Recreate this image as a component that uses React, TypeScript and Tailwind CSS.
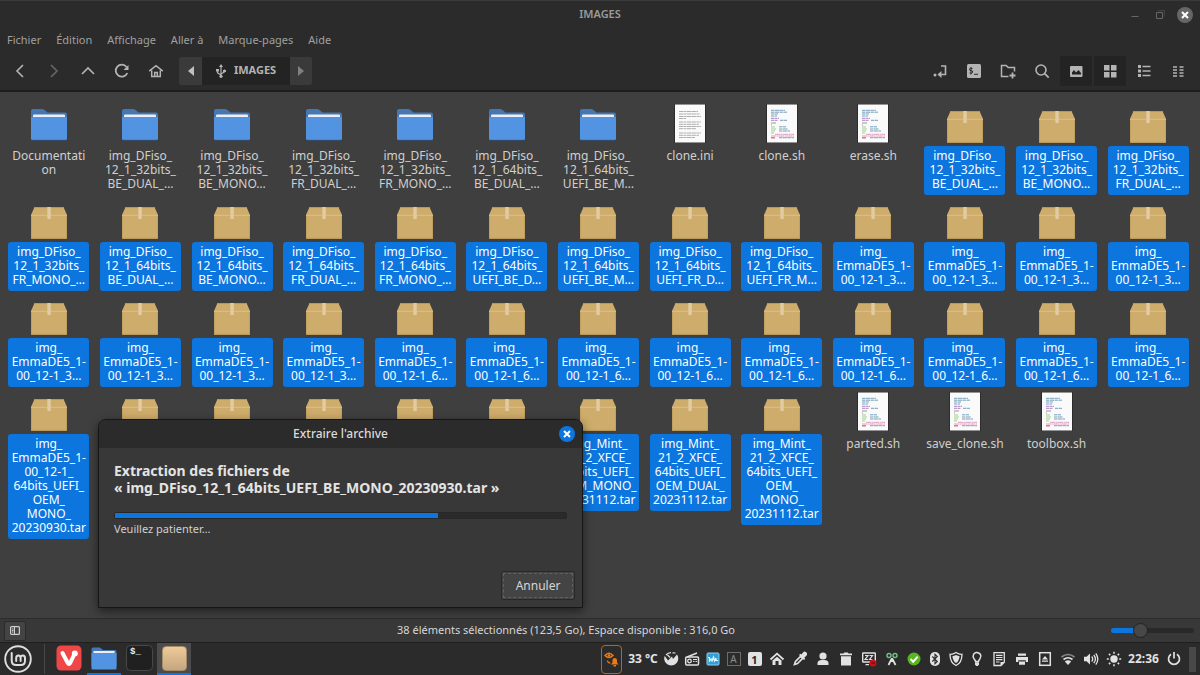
import type { ReactNode } from "react";

type FileKind = "folder" | "archive" | "text" | "script";

interface FileEntry {
  kind: FileKind;
  lines: string[];
  selected?: boolean;
}

const folder = (...lines: string[]): FileEntry => ({ kind: "folder", lines });
const script = (...lines: string[]): FileEntry => ({ kind: "script", lines });
const archive = (...lines: string[]): FileEntry => ({ kind: "archive", lines, selected: true });

const emma3 = archive("img_", "EmmaDE5_1-", "00_12-1_3…");
const emma6 = archive("img_", "EmmaDE5_1-", "00_12-1_6…");
const emmaOem = archive("img_", "EmmaDE5_1-", "00_12-1_", "64bits_UEFI_", "OEM_", "MONO_", "20230930.tar");
// label sits behind the dialog
const covered = archive();

const files: FileEntry[] = [
  folder("Documentati", "on"),
  folder("img_DFiso_", "12_1_32bits_", "BE_DUAL_…"),
  folder("img_DFiso_", "12_1_32bits_", "BE_MONO…"),
  folder("img_DFiso_", "12_1_32bits_", "FR_DUAL_…"),
  folder("img_DFiso_", "12_1_32bits_", "FR_MONO_…"),
  folder("img_DFiso_", "12_1_64bits_", "BE_DUAL_…"),
  folder("img_DFiso_", "12_1_64bits_", "UEFI_BE_M…"),
  { kind: "text", lines: ["clone.ini"] },
  script("clone.sh"),
  script("erase.sh"),
  archive("img_DFiso_", "12_1_32bits_", "BE_DUAL_…"),
  archive("img_DFiso_", "12_1_32bits_", "BE_MONO…"),
  archive("img_DFiso_", "12_1_32bits_", "FR_DUAL_…"),

  archive("img_DFiso_", "12_1_32bits_", "FR_MONO_…"),
  archive("img_DFiso_", "12_1_64bits_", "BE_DUAL_…"),
  archive("img_DFiso_", "12_1_64bits_", "BE_MONO…"),
  archive("img_DFiso_", "12_1_64bits_", "FR_DUAL_…"),
  archive("img_DFiso_", "12_1_64bits_", "FR_MONO_…"),
  archive("img_DFiso_", "12_1_64bits_", "UEFI_BE_D…"),
  archive("img_DFiso_", "12_1_64bits_", "UEFI_BE_M…"),
  archive("img_DFiso_", "12_1_64bits_", "UEFI_FR_D…"),
  archive("img_DFiso_", "12_1_64bits_", "UEFI_FR_M…"),
  emma3,
  emma3,
  emma3,
  emma3,

  emma3,
  emma3,
  emma3,
  emma3,
  emma6,
  emma6,
  emma6,
  emma6,
  emma6,
  emma6,
  emma6,
  emma6,
  emma6,

  emmaOem,
  covered,
  covered,
  covered,
  covered,
  covered,
  archive("img_Mint_", "21_2_XFCE_", "64bits_UEFI_", "OEM_MONO_", "20231112.tar"),
  archive("img_Mint_", "21_2_XFCE_", "64bits_UEFI_", "OEM_DUAL_", "20231112.tar"),
  archive("img_Mint_", "21_2_XFCE_", "64bits_UEFI_", "OEM_", "MONO_", "20231112.tar"),
  script("parted.sh"),
  script("save_clone.sh"),
  script("toolbox.sh"),
];

const menus = ["Fichier", "Édition", "Affichage", "Aller à", "Marque-pages", "Aide"];

/* file icons, all on a 48x44 canvas */
function FolderIcon() {
  return (
    <svg width="48" height="44" viewBox="0 0 48 44" aria-hidden="true">
      <path d="M6 12q0-2 2-2h9q1.500 0 2.500 1l3 2.500H40q2 0 2 2V38H6z" fill="#4677b5" />
      <path d="M8 16.500q0-1 1-1h30q1 0 1 1V22H8z" fill="#eeeef4" />
      <path d="M6 18h36v21.500q0 1.500-1.500 1.500h-33Q6 41 6 39.500z" fill="#5294e2" />
      <path d="M7 41.300h34" stroke="#30507c" strokeWidth="0.800" />
    </svg>
  );
}

function ArchiveIcon() {
  return (
    <svg width="48" height="44" viewBox="0 0 48 44" aria-hidden="true">
      <path d="M9.500 12h29l3.500 8v23.700H6V20z" fill="#ceac6b" />
      <path d="M9.500 12.500h29" stroke="#b9975a" />
      <path d="M6.500 20v23.200h35V20" fill="none" stroke="#c09f60" />
      <path d="M6 20.300h36" stroke="#dcc08a" />
      <path d="M22.300 12h3.500v12h-3.500z" fill="#e2cba0" />
    </svg>
  );
}

function PageIcon({ children }: { children: ReactNode }) {
  return (
    <svg width="48" height="44" viewBox="0 0 48 44" aria-hidden="true">
      <rect x="8" y="5" width="32" height="39.500" rx="1" fill="#2c2c2c" />
      <rect x="9" y="5.500" width="30" height="38" fill="#fafafa" />
      {children}
    </svg>
  );
}

function TextIcon() {
  return (
    <PageIcon>
      <g stroke="#a6a6a6" strokeWidth="0.900" strokeDasharray="4 0.500 2.500 0.500 5 0.400">
        <path d="M13 12.500h19M13 15h21M13 17.500h22M13 19.500h7M13 23h22M13 25.300h20M13 27.500h22M13 29.700h17M13 34h22M13 36.300h20M13 38.500h16" />
      </g>
    </PageIcon>
  );
}

function ScriptIcon() {
  return (
    <PageIcon>
      <g strokeWidth="1" fill="none" opacity="0.850">
        <path d="M13 11.300h14M13 13.200h16M13 15h7M13 17h6M22 21.300h7M21 27.800h7M21 30h9M21 32h11M21 38.700h15" stroke="#5e93b5" strokeDasharray="3 0.500 5 0.400" />
        <path d="M13 19.300h8M13 21.300h7" stroke="#a56bc0" strokeDasharray="3 0.500" />
        <path d="M13 24h5M13 26h1" stroke="#888" />
        <path d="M13 28h4M13 30h5M13 32h4M13 34h3" stroke="#8ccb77" />
        <path d="M17 35.300h19M13 37h23" stroke="#dd8ab4" strokeDasharray="5 0.600 2 0.500" />
        <path d="M13 38.800h4" stroke="#e2474f" strokeWidth="1.300" />
      </g>
    </PageIcon>
  );
}

const icons: Record<FileKind, () => ReactNode> = {
  folder: FolderIcon,
  archive: ArchiveIcon,
  text: TextIcon,
  script: ScriptIcon,
};

function FileTile({ kind, lines, selected }: FileEntry) {
  const Icon = icons[kind];
  return (
    <li className="flex flex-col items-center gap-[3px]">
      <Icon />
      <div
        className={
          selected
            ? "w-[81px] rounded-[3px] bg-[#0c75de] pt-[3px] pb-1 text-center text-white"
            : "w-[81px] pt-[3px] pb-1 text-center text-[#cfcfcf]"
        }
      >
        {lines.map((line, i) => (
          <div key={i} className="flex h-3.5 justify-center text-[12px] leading-[14px] whitespace-nowrap">
            {line}
          </div>
        ))}
      </div>
    </li>
  );
}

interface GlyphProps {
  size?: number;
  children: ReactNode;
}

/* 16px symbolic icon, stroked in the current colour */
function Glyph({ size = 16, children }: GlyphProps) {
  return (
    <svg
      width={size}
      height={size}
      viewBox="0 0 16 16"
      fill="none"
      stroke="currentColor"
      strokeWidth="1.600"
      aria-hidden="true"
      className="shrink-0"
    >
      {children}
    </svg>
  );
}

function ToolButton({ label, active, dim, children }: { label: string; active?: boolean; dim?: boolean; children: ReactNode }) {
  const base = "flex h-[30px] w-8 items-center justify-center rounded-xs";
  const tone = dim ? "text-[#686868]" : "text-[#b4b4b4]";
  return (
    <button aria-label={label} className={`${base} ${tone} ${active ? "bg-[#232323]" : ""}`}>
      {children}
    </button>
  );
}

function Toolbar() {
  return (
    <div className="flex h-[37px] items-center justify-between pr-1.5 pb-0.5 pl-1">
      <div className="flex items-center gap-0.5">
        <ToolButton label="Précédent">
          <Glyph><path d="M11 2L5 8l6 6" /></Glyph>
        </ToolButton>
        <ToolButton label="Suivant" dim>
          <Glyph><path d="M5 2l6 6-6 6" /></Glyph>
        </ToolButton>
        <ToolButton label="Dossier parent">
          <Glyph><path d="M2 11l6-6 6 6" /></Glyph>
        </ToolButton>
        <ToolButton label="Actualiser">
          <Glyph>
            <path d="M13.300 10A6 6 0 1 1 12.500 4" strokeWidth="1.800" />
            <path d="M14.500 2v5H9.500z" fill="currentColor" stroke="none" />
          </Glyph>
        </ToolButton>
        <ToolButton label="Dossier personnel">
          <Glyph>
            <path d="M1.200 8.200L8 2.600l6.800 5.600M3.700 7.500v6h8.600v-6M6.700 13.500v-4h2.600v4" strokeWidth="1.500" />
          </Glyph>
        </ToolButton>

        <div className="ml-[5px] flex h-7 overflow-hidden rounded-xs bg-[#232323]">
          <button aria-label="Faire défiler à gauche" className="flex w-[23px] items-center justify-center bg-[#3a3a3a] text-[#c0c0c0]">
            <svg width="6" height="10" viewBox="0 0 6 10"><path d="M6 0v10L0 5z" fill="currentColor" /></svg>
          </button>
          <button className="flex w-[88px] items-center justify-center gap-2 text-[11px] font-bold text-[#b4b4b4]">
            <svg width="10" height="14" viewBox="0 0 10 14" fill="none" stroke="currentColor" strokeWidth="1.200" aria-hidden="true">
              <path d="M5 1.500v11M5 11L1.500 8.800V6.500M5 10l3.500-2V5.500" />
              <path d="M5 0l2 3H3zM0 5h3v2.500H0zM7 6h3v2H7z" fill="currentColor" stroke="none" />
              <circle cx="5" cy="12.300" r="1.600" fill="currentColor" stroke="none" />
            </svg>
            IMAGES
          </button>
          <button aria-label="Faire défiler à droite" className="flex w-[22px] items-center justify-center bg-[#3a3a3a] text-[#808080]">
            <svg width="6" height="10" viewBox="0 0 6 10"><path d="M0 0v10l6-5z" fill="currentColor" /></svg>
          </button>
        </div>
      </div>

      <div className="flex items-center gap-0.5">
        <ToolButton label="Basculer vers l'emplacement">
          <Glyph>
            <path d="M9 3h4.500v8.500H7" />
            <path d="M9.500 8v7L5.500 11.500z" fill="currentColor" stroke="none" />
            <circle cx="3" cy="12" r="1.500" fill="currentColor" stroke="none" />
          </Glyph>
        </ToolButton>
        <ToolButton label="Ouvrir dans un terminal">
          <Glyph>
            <rect x="1" y="1" width="14" height="14" rx="1.500" fill="currentColor" stroke="none" />
            <path d="M6.500 5.500q-3-1-3 .7t1.700 1.500 1.500 1.400-3.200.9M5 4v7.500M8 11.300h4" stroke="#2b2b2b" strokeWidth="1" />
          </Glyph>
        </ToolButton>
        <ToolButton label="Nouveau dossier">
          <Glyph>
            <path d="M8.500 13.500h-7V2.500h4.700l2 2h6.300v4" strokeWidth="1.500" />
            <path d="M12.500 9.500v6M9.500 12.500h6" strokeWidth="1.800" />
          </Glyph>
        </ToolButton>
        <ToolButton label="Rechercher">
          <Glyph>
            <circle cx="7" cy="7" r="5" />
            <path d="M10.700 10.700l4 4" strokeWidth="1.800" />
          </Glyph>
        </ToolButton>
        <ToolButton label="Afficher les aperçus" active>
          <Glyph>
            <rect x="2" y="3" width="12.500" height="11" rx="1" fill="currentColor" stroke="none" />
            <path d="M4 11.500V9.500L6 7l2 2.500L10.500 7 13 10v1.500z" fill="#232323" stroke="none" />
          </Glyph>
        </ToolButton>
        <ToolButton label="Vue en icônes" active>
          <Glyph>
            <path d="M2 2h5.500v5.500H2zM9 2h5.500v5.500H9zM2 9h5.500v5.500H2zM9 9h5.500v5.500H9z" fill="currentColor" stroke="none" />
          </Glyph>
        </ToolButton>
        <ToolButton label="Vue en liste">
          <Glyph>
            <path d="M2 2h3v3H2zM2 6.500h3v3H2zM2 11h3v3H2z" fill="currentColor" stroke="none" />
            <path d="M6.500 3.500h8M6.500 8h8M6.500 12.500h8" />
          </Glyph>
        </ToolButton>
        <ToolButton label="Vue compacte">
          <Glyph>
            <path d="M3 4h4M9.500 4h4M3 7h4M9.500 7h4M3 10h4M9.500 10h4M3 13h4M9.500 13h4" strokeWidth="1.400" />
          </Glyph>
        </ToolButton>
      </div>
    </div>
  );
}

function Header() {
  return (
    <header className="border-b-2 border-[#1d1d1d] bg-[#2b2b2b]">
      <div className="grid h-7 grid-cols-[1fr_auto_1fr] items-center border-t border-[#3a3a3a]">
        <span />
        <h1 className="text-[11px] font-semibold text-[#9a9a9a]">IMAGES</h1>
        <div className="flex items-center justify-end gap-[9px] pr-[7px] text-[#666]">
          <button aria-label="Réduire">
            <Glyph><path d="M4.500 9.500h7" strokeWidth="1" /></Glyph>
          </button>
          <button aria-label="Agrandir">
            <Glyph>
              <path d="M6.500 3.500h6v6" strokeWidth="1" stroke="#444" />
              <path d="M4.500 5.500h6v6h-6z" strokeWidth="1" />
            </Glyph>
          </button>
          <button aria-label="Fermer" className="flex size-4 items-center justify-center rounded-full bg-[#666] text-white">
            <Glyph><path d="M5 5l6 6M11 5l-6 6" strokeWidth="2" /></Glyph>
          </button>
        </div>
      </div>
      <nav className="flex h-[25px] items-center gap-[15px] px-[7px]">
        {menus.map((menu) => (
          <button key={menu} className="text-[11px] text-[#a0a0a0]">
            {menu}
          </button>
        ))}
      </nav>
      <Toolbar />
    </header>
  );
}

function ExtractDialog() {
  const progress = 71.600;
  return (
    <section
      role="dialog"
      aria-labelledby="dialog-title"
      className="absolute top-[327px] left-[98px] w-[485px] rounded-t-lg border border-[#161616] bg-[#383838] shadow-[0_3px_10px_rgba(0,0,0,0.5)]"
    >
      <div className="grid h-7 grid-cols-[1fr_auto_1fr] items-center rounded-t-lg bg-[#2b2b2b]">
        <span />
        <h2 id="dialog-title" className="text-[12px] font-medium text-[#dadada]">
          Extraire l'archive
        </h2>
        <button aria-label="Fermer" className="mr-[7px] flex size-4 items-center justify-center justify-self-end rounded-full bg-[#0c75de] text-white">
          <Glyph><path d="M5 5l6 6M11 5l-6 6" strokeWidth="2" /></Glyph>
        </button>
      </div>
      <div className="px-[15px] pt-[14px]">
        <p className="text-[14px] leading-[17px] font-bold whitespace-nowrap text-[#e4e4e4]">
          Extraction des fichiers de
          <br />« img_DFiso_12_1_64bits_UEFI_BE_MONO_20230930.tar »
        </p>
        <div
          role="progressbar"
          aria-label="Extraction"
          aria-valuenow={Math.round(progress)}
          className="mt-4 h-[7px] rounded-xs border border-[#272727] bg-[#2a2a2a]"
        >
          <div className="h-full bg-[#0c75de]" style={{ width: `${progress}%` }} />
        </div>
        <p className="mt-[3px] text-[11px] leading-[14px] text-[#cfcfcf]">Veuillez patienter…</p>
      </div>
      <div className="flex justify-end px-[7px] pt-[35px] pb-[7px]">
        <button className="h-[29px] w-[74px] rounded-xs border border-[#292929] bg-[#444] p-px text-[12px] text-[#d6d6d6]">
          <span className="flex h-full items-center justify-center border border-dashed border-[#606060]">Annuler</span>
        </button>
      </div>
    </section>
  );
}

function StatusBar() {
  return (
    <footer className="grid h-6 grid-cols-[30px_1fr_96px] items-center border-t border-[#2d2d2d] bg-[#383838] pr-1.5 pl-1">
      <button aria-label="Panneau latéral" className="flex h-5 w-[22px] items-center justify-center rounded-xs border border-[#2b2b2b] bg-[#444] text-[#d0d0d0]">
        <svg width="10" height="9" viewBox="0 0 10 9" fill="none" stroke="currentColor" aria-hidden="true">
          <rect x="0.600" y="0.600" width="8.800" height="7.800" rx="1" strokeWidth="1.200" />
          <path d="M4.500 1v7M2 3h1.500M2 4.500h1.500M2 6h1.500" />
        </svg>
      </button>
      <p className="text-center text-[11px] text-[#d6d6d6]">38 éléments sélectionnés (123,5 Go), Espace disponible : 316,0 Go</p>
      <input
        type="range"
        aria-label="Zoom"
        min={0}
        max={100}
        defaultValue={32}
        className="h-4 w-[83px] appearance-none justify-self-end bg-transparent [&::-webkit-slider-runnable-track]:h-[5px] [&::-webkit-slider-runnable-track]:rounded-full [&::-webkit-slider-runnable-track]:bg-[linear-gradient(to_right,#0c75de_30%,#292929_30%)] [&::-webkit-slider-thumb]:-mt-[5px] [&::-webkit-slider-thumb]:size-[15px] [&::-webkit-slider-thumb]:appearance-none [&::-webkit-slider-thumb]:rounded-full [&::-webkit-slider-thumb]:border [&::-webkit-slider-thumb]:border-[#222] [&::-webkit-slider-thumb]:bg-[#484848]"
      />
    </footer>
  );
}

function AppButton({ label, open, active, children }: { label: string; open?: boolean; active?: boolean; children: ReactNode }) {
  return (
    <button
      aria-label={label}
      className={`flex h-full w-[34px] items-center justify-center border-b-2 ${open ? "border-[#0c75de]" : "border-transparent"} ${active ? "bg-[#4c4c4c]" : ""}`}
    >
      {children}
    </button>
  );
}

function Tray() {
  return (
    <div className="flex h-full items-center text-[#e2e2e2]">
      <button aria-label="Redshift" className="mr-1 flex h-[29px] w-[21px] items-center justify-center rounded-sm border border-[#b5651d] text-[#ee7a13]">
        <Glyph>
          <path d="M1 4.500q4-4.500 8 0-4 4-8 0z" strokeWidth="1.500" />
          <circle cx="5" cy="4.500" r="1.300" fill="currentColor" stroke="none" />
          <path d="M7 13.500l1.500-2V9q0-2 2.200-2T13 9v2.500l1.500 2zM9.500 14h2.500v1.500H9.500z" fill="currentColor" stroke="none" />
          <path d="M3.500 9.500q0 2.500 3 2.500" strokeWidth="1.200" />
        </Glyph>
      </button>
      <span className="w-[34px] text-center text-[12px] font-bold whitespace-nowrap">33 °C</span>

      <div className="grid auto-cols-[21px] grid-flow-col justify-items-center">
        <Glyph>
          <path d="M1.800 5L5 9.500 9 5.500l1 2.500 4-4.500a7 7 0 1 1-12.500 2z" fill="currentColor" stroke="none" />
          <path d="M3 4Q5 1.700 8 1.600" strokeWidth="1.300" />
          <path d="M4.500 4l2.700 2.500M9.500 1.800l3 .2" strokeWidth="1.200" />
        </Glyph>
        <Glyph>
          <path d="M3 6l10-4" strokeWidth="1.400" />
          <rect x="1.700" y="6" width="12.800" height="8" rx="1" strokeWidth="1.500" />
          <circle cx="5.500" cy="10" r="1.800" strokeWidth="1.300" />
          <path d="M9 8.500h4M9 10.500h1.500M11.500 10.500H13" strokeWidth="1.200" />
        </Glyph>
        <Glyph>
          <rect x="2" y="2" width="12" height="12" rx="1" fill="#2e9fd8" stroke="#8fd0ef" strokeWidth="1" />
          <path d="M3 6.500h1.500V10L6 8l1 2 1.500-4L9.500 10 11 7v2.500h2" stroke="#eaf8ff" strokeWidth="1.200" />
        </Glyph>
        <span className="flex size-3.5 items-center justify-center self-center border border-[#6c6c6c] text-[10px] leading-[10px] text-[#8c8c8c]">A</span>
        <span className="flex size-3.5 items-center justify-center self-center rounded-xs bg-[#e2e2e2] text-[11px] leading-[11px] font-bold text-[#2b2b2b]">1</span>
      </div>

      <div className="grid auto-cols-[23px] grid-flow-col justify-items-center">
        <Glyph>
          <path d="M1.500 8.500L8 2.700l6.500 5.800" strokeWidth="1.800" />
          <path d="M3.500 9.500L8 5.700l4.500 3.800V14h-3v-4h-3v4h-3z" fill="currentColor" stroke="none" />
        </Glyph>
        <Glyph>
          <path d="M2.500 13.500l1-3 5-5 2 2-5 5z" strokeWidth="1.700" />
          <path d="M7 4l5 5 1.300-1.300-1-1L15 4q.5-2-1-3t-2.500 0L9.300 3.500l-1-.8z" fill="currentColor" stroke="none" />
        </Glyph>
        <Glyph>
          <circle cx="8" cy="5" r="3.600" fill="currentColor" stroke="none" />
          <path d="M2.500 14v-2q0-2.500 3.500-3h4q3.500.5 3.500 3v2z" fill="currentColor" stroke="none" />
        </Glyph>
        <Glyph>
          <path d="M2 2.500h3.500l.7-1h3.600l.7 1H14v1.700H2zM3 5.200h10V14.500H3z" fill="currentColor" stroke="none" />
        </Glyph>
        <Glyph>
          <rect x="1.700" y="2" width="12.600" height="9" rx="0.500" strokeWidth="1.400" />
          <path d="M4 4.500h3L4 8.500h3M8.500 4.500h3l-3 4h3M4.500 13.700H8" strokeWidth="1.200" />
          <circle cx="12" cy="12" r="3.500" fill="#cc1018" stroke="none" />
          <path d="M10 12h4" stroke="#641014" strokeWidth="1.200" />
        </Glyph>
        <Glyph>
          <path d="M7.500 8l-3 6M8.500 8l3 6M8 7v4" strokeWidth="1.700" />
          <circle cx="5" cy="4.500" r="2" stroke="#72c08c" strokeWidth="1.400" />
          <circle cx="11" cy="4.500" r="2" stroke="#72c08c" strokeWidth="1.400" />
        </Glyph>
      </div>

      <div className="grid auto-cols-[21px] grid-flow-col justify-items-center">
        <Glyph>
          <circle cx="8" cy="8" r="6.500" fill="#57b51f" stroke="none" />
          <path d="M4.500 8l2.700 2.700 4.500-5" stroke="#fff" strokeWidth="2" />
        </Glyph>
        <Glyph>
          <rect x="3" y="1" width="10" height="14" rx="4.800" fill="currentColor" stroke="none" />
          <path d="M5.300 5.500l5 5L8 12.700V3.300l2.300 2.200-5 5" stroke="#2b2b2b" strokeWidth="1.100" />
        </Glyph>
        <Glyph>
          <path d="M8 1.500q3 2 6 1.800Q14 12 8 14.500 2 12 2 3.300q3 .2 6-1.800z" strokeWidth="1.300" />
          <path d="M8 4q1.800 1 3.600 1.200Q11.200 10 8 12 4.800 10 4.400 5.200 6.200 5 8 4z" fill="currentColor" stroke="none" />
        </Glyph>
        <Glyph>
          <path d="M6.500 10.500Q6.300 9 5 7.700 3.500 6 4.500 3.500T8 1.500t3.500 2-.5 4.200q-1.300 1.300-1.500 2.800z" strokeWidth="1.500" />
          <path d="M6 11.300h4v2L8.800 15H7.200L6 13.300z" fill="currentColor" stroke="none" />
        </Glyph>
      </div>

      <div className="grid auto-cols-[23px] grid-flow-col justify-items-center">
        <Glyph>
          <path d="M3 1.700h10.300v9.500L10 14.500H3z" strokeWidth="1.300" />
          <path d="M5 4.300h6.500M5 6.500h6.500M5 8.700h6.500M5 11h3.500" strokeWidth="1.200" />
          <path d="M9.500 11h4l-4 4z" fill="currentColor" stroke="none" />
        </Glyph>
        <Glyph>
          <path d="M4 2.500h8v2.300H4zM2 6h12v5h-2.300V9.300H4.300V11H2zM5 10.500h6v3.300H5z" fill="currentColor" stroke="none" />
        </Glyph>
        <Glyph>
          <rect x="2.700" y="1.700" width="10.600" height="12.600" strokeWidth="1.500" />
          <path d="M8 5l3 3.500H5zM5 9.500h6v1.300H5z" fill="currentColor" stroke="none" />
        </Glyph>
        <Glyph>
          <path d="M1.500 6q6.500-5 13 0" stroke="#8a8a8a" />
          <path d="M3.500 8.500q4.500-3.500 9 0" />
          <path d="M8 14L4.800 10.500q3.200-2.300 6.400 0z" fill="currentColor" stroke="none" />
        </Glyph>
        <Glyph>
          <path d="M1 5.700h2.500L7 2.500v11l-3.500-3.200H1z" fill="currentColor" stroke="none" />
          <path d="M8.700 5.500q2 2.500 0 5M10.800 3.800q3.200 4.200 0 8.400M12.800 2.300q4 5.700 0 11.400" strokeWidth="1.300" />
        </Glyph>
        <Glyph>
          <circle cx="8" cy="8" r="3.700" fill="currentColor" stroke="none" />
          <path d="M8 .8v2M8 13.200v2M.8 8h2M13.200 8h2M2.900 2.900l1.400 1.400M11.700 11.700l1.400 1.400M13.100 2.900l-1.400 1.400M4.300 11.700l-1.400 1.400" strokeWidth="1.500" />
        </Glyph>
      </div>

      <time className="w-[37px] text-center text-[12px] font-bold">22:36</time>
      <button aria-label="Éteindre" className="flex w-6 justify-center">
        <Glyph>
          <path d="M5 3.200a5.500 5.500 0 1 0 6 0M8 1v6.500" strokeWidth="1.700" />
        </Glyph>
      </button>
      <button aria-label="Afficher le bureau" className="mr-1 ml-[3px] h-[25px] w-[7px] bg-[#484848]" />
    </div>
  );
}

function Taskbar() {
  return (
    <div className="flex h-[33px] items-center justify-between border-t border-[#1f1f1f] bg-[#2b2b2b]">
      <div className="flex h-full items-center">
        <button aria-label="Menu" className="ml-1 flex">
          <svg width="28" height="28" viewBox="0 0 28 28" fill="none" stroke="#dedede" strokeLinecap="round" aria-hidden="true">
            <circle cx="14" cy="14" r="12.800" strokeWidth="1.900" />
            <path d="M7.700 8v7.500q0 4.500 4.500 4.500h4.600q4.200 0 4.200-4.200V13q0-2.500-2.200-2.500T16.600 13v3M16.600 13q0-2.500-2.200-2.500T12.200 13v3" strokeWidth="2" />
          </svg>
        </button>
        <div className="ml-3 h-[30px] w-px bg-[#484848]" />
        <div className="ml-[7px] flex h-full gap-px">
          <AppButton label="Vivaldi">
            <svg width="26" height="26" viewBox="0 0 26 26" aria-hidden="true">
              <rect x="0.500" y="0.500" width="25" height="25" rx="4.500" fill="#ef4648" />
              <path d="M6.500 8l5.300 10q1.200 2 2.400 0L17.500 11" fill="none" stroke="#fff" strokeWidth="4" strokeLinecap="round" strokeLinejoin="round" />
              <circle cx="18.800" cy="8.500" r="3" fill="#fff" />
            </svg>
          </AppButton>
          <AppButton label="Fichiers" open>
            <svg width="26" height="24" viewBox="0 0 26 24" aria-hidden="true">
              <path d="M.5 3q0-1.500 1.500-1.500h7L12 4h12q1.500 0 1.500 1.500V20H.5z" fill="#4677b5" />
              <path d="M2.500 5h21v4h-21z" fill="#eeeef4" />
              <path d="M.5 7h25v15.500q0 1-1 1h-23q-1 0-1-1z" fill="#5294e2" />
            </svg>
          </AppButton>
          <AppButton label="Terminal">
            <svg width="27" height="26" viewBox="0 0 27 26" aria-hidden="true">
              <rect x="0.500" y="0.500" width="26" height="25" rx="4" fill="#202020" stroke="#484848" />
              <text x="4" y="9" fill="#efefef" fontSize="9" fontWeight="bold" fontFamily="Liberation Mono, monospace">
                $_
              </text>
            </svg>
          </AppButton>
          <AppButton label="Gestionnaire d'archives" open active>
            <div className="size-[25px] rounded-sm border border-[#a98d69] bg-linear-to-b from-[#efca9a] to-[#c4a67f]" />
          </AppButton>
        </div>
      </div>
      <Tray />
    </div>
  );
}

export default function App() {
  return (
    <div className="flex min-h-screen flex-col bg-[#2b2b2b] font-['Noto_Sans','Open_Sans',sans-serif]">
      <Header />
      <main className="relative flex-1 bg-[#3f3f3f]">
        <ul className="grid grid-cols-13 pt-[7px] pr-[6px] pl-[3px]">
          {files.map((file, i) => (
            <FileTile key={i} {...file} />
          ))}
        </ul>
        <ExtractDialog />
      </main>
      <StatusBar />
      <Taskbar />
    </div>
  );
}
